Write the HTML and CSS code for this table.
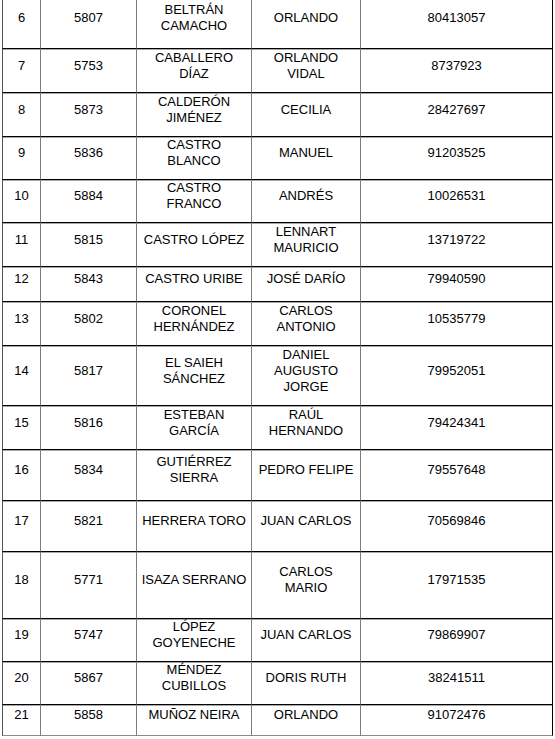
FILE: index.html
```html
<!DOCTYPE html>
<html lang="es">
<head>
<meta charset="utf-8">
<title>Listado</title>
<link rel="stylesheet" href="styles.css">
</head>
<body>
<table class="list">
  <colgroup>
    <col class="c1"><col class="c2"><col class="c3"><col class="c4"><col class="c5">
  </colgroup>
  <tbody>
    <tr class="h51"><td><p>6</p></td><td><p>5807</p></td><td><p>BELTRÁN CAMACHO</p></td><td class="n"><p>ORLANDO</p></td><td><p>80413057</p></td></tr>
    <tr class="h44"><td><p>7</p></td><td><p>5753</p></td><td><p>CABALLERO DÍAZ</p></td><td class="n"><p>ORLANDO VIDAL</p></td><td><p>8737923</p></td></tr>
    <tr class="h44"><td><p>8</p></td><td><p>5873</p></td><td><p>CALDERÓN JIMÉNEZ</p></td><td class="n"><p>CECILIA</p></td><td><p>28427697</p></td></tr>
    <tr class="h43"><td><p>9</p></td><td><p>5836</p></td><td><p>CASTRO BLANCO</p></td><td class="n"><p>MANUEL</p></td><td><p>91203525</p></td></tr>
    <tr class="h43"><td><p>10</p></td><td><p>5884</p></td><td><p>CASTRO FRANCO</p></td><td class="n"><p>ANDRÉS</p></td><td><p>10026531</p></td></tr>
    <tr class="h44"><td><p>11</p></td><td><p>5815</p></td><td><p>CASTRO LÓPEZ</p></td><td class="n"><p>LENNART MAURICIO</p></td><td><p>13719722</p></td></tr>
    <tr class="h35"><td><p>12</p></td><td><p>5843</p></td><td><p>CASTRO URIBE</p></td><td class="n"><p>JOSÉ DARÍO</p></td><td><p>79940590</p></td></tr>
    <tr class="h44"><td><p>13</p></td><td><p>5802</p></td><td><p>CORONEL HERNÁNDEZ</p></td><td class="n"><p>CARLOS ANTONIO</p></td><td><p>10535779</p></td></tr>
    <tr class="h60"><td><p>14</p></td><td><p>5817</p></td><td><p>EL SAIEH SÁNCHEZ</p></td><td class="n"><p>DANIEL AUGUSTO JORGE</p></td><td><p>79952051</p></td></tr>
    <tr class="h44"><td><p>15</p></td><td><p>5816</p></td><td><p>ESTEBAN GARCÍA</p></td><td class="n"><p>RAÚL HERNANDO</p></td><td><p>79424341</p></td></tr>
    <tr class="h51"><td><p>16</p></td><td><p>5834</p></td><td><p>GUTIÉRREZ SIERRA</p></td><td class="n"><p>PEDRO FELIPE</p></td><td><p>79557648</p></td></tr>
    <tr class="h51"><td><p>17</p></td><td><p>5821</p></td><td><p>HERRERA TORO</p></td><td class="n"><p>JUAN CARLOS</p></td><td><p>70569846</p></td></tr>
    <tr class="h67"><td><p>18</p></td><td><p>5771</p></td><td><p>ISAZA SERRANO</p></td><td class="n"><p>CARLOS MARIO</p></td><td><p>17971535</p></td></tr>
    <tr class="h43"><td><p>19</p></td><td><p>5747</p></td><td><p>LÓPEZ GOYENECHE</p></td><td class="n"><p>JUAN CARLOS</p></td><td><p>79869907</p></td></tr>
    <tr class="h43"><td><p>20</p></td><td><p>5867</p></td><td><p>MÉNDEZ CUBILLOS</p></td><td class="n"><p>DORIS RUTH</p></td><td><p>38241511</p></td></tr>
    <tr class="h31 last"><td><p>21</p></td><td><p>5858</p></td><td><p>MUÑOZ NEIRA</p></td><td class="n"><p>ORLANDO</p></td><td><p>91072476</p></td></tr>
  </tbody>
</table>
</body>
</html>
```

FILE: styles.css
```css
html, body {
  margin: 0;
  padding: 0;
  background: #ffffff;
}

body {
  font-family: "Liberation Sans", Arial, sans-serif;
  font-size: 13px;
  line-height: 16px;
  color: #000000;
  overflow: hidden;
}

.list {
  table-layout: fixed;
  border-collapse: separate;
  border-spacing: 0;
  width: 551px;
  margin: -2px 0 0 2px;
}

.c1 { width: 39px; }
.c2 { width: 96px; }
.c3 { width: 115px; }
.c4 { width: 109px; }
.c5 { width: 192px; }

.list td {
  box-sizing: border-box;
  padding: 0 3px;
  text-align: center;
  vertical-align: middle;
  border-right: 1px solid #7d7d7d;
  border-bottom: 1px solid #000000;
  box-shadow: inset 0 1px 0 #a8a8a8;
}

.list tr:first-child td {
  box-shadow: none;
}

.list td:first-child {
  border-left: 1px solid #555555;
}

.list td:last-child {
  border-right: 1px solid #000000;
}

.list td.n {
  padding: 0 5px;
}

.list tr.last td {
  border-bottom-color: #8a8a8a;
}

.list p {
  margin: 0 0 10px 0;
}

.h31 td { height: 31px; }
.h35 td { height: 35px; }
.h43 td { height: 43px; }
.h44 td { height: 44px; }
.h51 td { height: 51px; }
.h60 td { height: 60px; }
.h67 td { height: 67px; }
```
